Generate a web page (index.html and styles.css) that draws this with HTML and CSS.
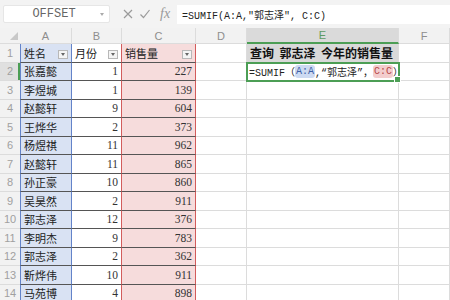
FILE: index.html
```html
<!DOCTYPE html>
<html lang="zh-CN">
<head>
    <meta charset="UTF-8">
    <title>SUMIF</title>
    <link rel="stylesheet" href="styles.css">
</head>
<body>
    <div class="toolbar">
        <div class="namebox"><span class="name">OFFSET</span><span class="caret"></span></div>
        <div class="tools">
            <svg class="icon" width="12" height="12" viewBox="0 0 12 12"><path d="M2 2 L10 10 M10 2 L2 10" stroke="#9a9a9a" stroke-width="1.2" fill="none"/></svg>
            <svg class="icon" width="12" height="12" viewBox="0 0 12 12"><path d="M1.5 6.5 L4.5 9.5 L10.5 2" stroke="#9a9a9a" stroke-width="1.2" fill="none"/></svg>
            <span class="fx">fx</span>
        </div>
        <div class="formula">=SUMIF(A:A,"郭志泽", C:C)</div>
    </div>

    <div class="sheet">
        <div class="cell corner"><span class="tri"></span></div>
        <div class="cell ch">A</div><div class="cell ch">B</div><div class="cell ch">C</div><div class="cell ch">D</div><div class="cell ch on">E</div><div class="cell ch">F</div>

        <div class="cell rh">1</div>
        <div class="cell a t">姓名<span class="filter"></span></div>
        <div class="cell b t hd">月份<span class="filter"></span></div>
        <div class="cell c t hd">销售量<span class="filter"></span></div>
        <div class="cell d"></div>
        <div class="cell e title">查询&nbsp;&nbsp;郭志泽&nbsp;&nbsp;今年的销售量</div>
        <div class="cell f"></div>

        <div class="cell rh on">2</div>
        <div class="cell a t">张嘉懿</div><div class="cell b t num">1</div><div class="cell c t num">227</div>
        <div class="cell d"></div>
        <div class="cell e edit">=SUMIF（<span class="ref-a">A:A</span>,“郭志泽”，<span class="ref-c">C:C</span>）</div>
        <div class="cell f"></div>

        <div class="cell rh">3</div>
        <div class="cell a t">李煜城</div><div class="cell b t num">1</div><div class="cell c t num">139</div>
        <div class="cell d"></div><div class="cell e"></div><div class="cell f"></div>

        <div class="cell rh">4</div>
        <div class="cell a t">赵懿轩</div><div class="cell b t num">9</div><div class="cell c t num">604</div>
        <div class="cell d"></div><div class="cell e"></div><div class="cell f"></div>

        <div class="cell rh">5</div>
        <div class="cell a t">王烨华</div><div class="cell b t num">2</div><div class="cell c t num">373</div>
        <div class="cell d"></div><div class="cell e"></div><div class="cell f"></div>

        <div class="cell rh">6</div>
        <div class="cell a t">杨煜祺</div><div class="cell b t num">11</div><div class="cell c t num">962</div>
        <div class="cell d"></div><div class="cell e"></div><div class="cell f"></div>

        <div class="cell rh">7</div>
        <div class="cell a t">赵懿轩</div><div class="cell b t num">11</div><div class="cell c t num">865</div>
        <div class="cell d"></div><div class="cell e"></div><div class="cell f"></div>

        <div class="cell rh">8</div>
        <div class="cell a t">孙正豪</div><div class="cell b t num">10</div><div class="cell c t num">860</div>
        <div class="cell d"></div><div class="cell e"></div><div class="cell f"></div>

        <div class="cell rh">9</div>
        <div class="cell a t">吴昊然</div><div class="cell b t num">2</div><div class="cell c t num">911</div>
        <div class="cell d"></div><div class="cell e"></div><div class="cell f"></div>

        <div class="cell rh">10</div>
        <div class="cell a t">郭志泽</div><div class="cell b t num">12</div><div class="cell c t num">376</div>
        <div class="cell d"></div><div class="cell e"></div><div class="cell f"></div>

        <div class="cell rh">11</div>
        <div class="cell a t">李明杰</div><div class="cell b t num">9</div><div class="cell c t num">783</div>
        <div class="cell d"></div><div class="cell e"></div><div class="cell f"></div>

        <div class="cell rh">12</div>
        <div class="cell a t">郭志泽</div><div class="cell b t num">2</div><div class="cell c t num">362</div>
        <div class="cell d"></div><div class="cell e"></div><div class="cell f"></div>

        <div class="cell rh">13</div>
        <div class="cell a t">靳烨伟</div><div class="cell b t num">10</div><div class="cell c t num">911</div>
        <div class="cell d"></div><div class="cell e"></div><div class="cell f"></div>

        <div class="cell rh">14</div>
        <div class="cell a t">马苑博</div><div class="cell b t num">4</div><div class="cell c t num">898</div>
        <div class="cell d"></div><div class="cell e"></div><div class="cell f"></div>
    </div>
</body>
</html>
```

FILE: styles.css
```css
* {
    box-sizing: border-box;
}
body {
    margin: 0;
    width: 450px;
    height: 300px;
    overflow: hidden;
    background: #fff;
    font-family: "Noto Sans CJK SC", sans-serif;
    color: #222;
}
.toolbar {
    height: 28px;
    background: #f3f3f3;
    display: flex;
    align-items: center;
    padding-left: 3px;
}
.namebox {
    width: 107px;
    height: 18px;
    background: #fff;
    border: 1px solid #e6e6e6;
    border-radius: 2px;
    display: flex;
    align-items: center;
}
.name {
    flex: 1;
    text-align: center;
    font: 12px "Liberation Mono", monospace;
    color: #666;
    padding-left: 4px;
}
.caret {
    width: 0;
    height: 0;
    margin-right: 5px;
    border-left: 2px solid transparent;
    border-right: 2px solid transparent;
    border-top: 3px solid #aaa;
}
.tools {
    width: 67px;
    display: flex;
    align-items: center;
    padding-left: 12px;
    gap: 5px;
}
.fx {
    margin-left: 4px;
    font: italic 14px "Liberation Serif", serif;
    color: #999;
}
.formula {
    flex: 1;
    height: 19px;
    background: #fff;
    display: flex;
    align-items: center;
    padding-left: 5px;
    font: 10px "Liberation Mono", "Noto Sans CJK SC", monospace;
    color: #222;
}
.sheet {
    display: grid;
    grid-template-columns: 20px 52px 50px 74px 51px 152px 51px;
    grid-template-rows: 16px repeat(14, 18.5px);
}
.cell {
    border-right: 1px solid #dcdcdc;
    border-bottom: 1px solid #dcdcdc;
    display: flex;
    align-items: center;
    padding: 0 3px;
    font-size: 11px;
    white-space: nowrap;
    overflow: hidden;
}
.corner {
    background: #f2f2f2;
    justify-content: flex-end;
    align-items: flex-end;
    padding: 0 2px 3px 0;
    border-right: none;
}
.tri {
    width: 0;
    height: 0;
    border-left: 8px solid transparent;
    border-bottom: 8px solid #c8c8c8;
}
.ch {
    background: #f2f2f2;
    justify-content: center;
    font: 11px "Liberation Sans", sans-serif;
    color: #8e8e8e;
}
.ch.on {
    background: #dadada;
    border-bottom: 2px solid #4c9e55;
    color: #5d9a62;
}
.rh {
    background: #f2f2f2;
    justify-content: center;
    padding: 0;
    font: 11px "Liberation Sans", sans-serif;
    color: #a0a0a0;
    border-right: none;
}
.rh.on {
    background: #e0e0e0;
    box-shadow: inset -2px 0 0 #4c9e55;
}
.a {
    background: #d9e2f3;
    border-left: 1px solid #6383c9;
    border-right-color: #6383c9;
}
.b {
    border-right-color: #d25c5c;
}
.c {
    background: #f6dcdc;
    border-right-color: #d25c5c;
}
.t {
    border-bottom-color: #555;
}
.num {
    justify-content: flex-end;
    font: 11.5px "Liberation Serif", serif;
    color: #333;
}
.filter {
    margin-left: auto;
    align-self: flex-end;
    margin-bottom: 3px;
    width: 10px;
    height: 9px;
    border: 1px solid #b8b8b8;
    background: #f4f4f4;
    display: flex;
    align-items: center;
    justify-content: center;
}
.filter::after {
    content: "";
    border-left: 2.5px solid transparent;
    border-right: 2.5px solid transparent;
    border-top: 3px solid #666;
}
.title {
    background: #d9d9d9;
    font-weight: bold;
    font-size: 12px;
    color: #111;
    padding-left: 3px;
}
.edit {
    position: relative;
    outline: 2px solid #4c9e55;
    outline-offset: -1px;
    padding-left: 2px;
    font: 10px "Liberation Mono", "Noto Sans CJK SC", monospace;
    color: #222;
    overflow: visible;
}
.edit::after {
    content: "";
    position: absolute;
    right: -3px;
    bottom: -3px;
    width: 5px;
    height: 5px;
    background: #4c9e55;
    border: 1px solid #fff;
}
.ref-a {
    background: #cddaf2;
    color: #3e5fa6;
    border-radius: 3px;
    padding: 1px 1px;
}
.ref-c {
    background: #f3cdcd;
    color: #b54848;
    border-radius: 3px;
    padding: 1px 1px;
}
```
